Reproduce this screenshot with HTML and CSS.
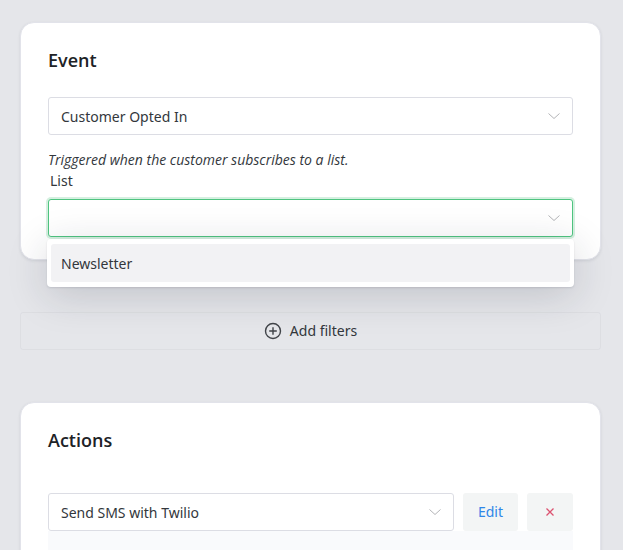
FILE: index.html
```html
<!DOCTYPE html>
<html lang="en">
<head>
<meta charset="utf-8">
<meta name="viewport" content="width=device-width, initial-scale=1">
<title>Event</title>
<link rel="stylesheet" href="styles.css">
</head>
<body>
<main class="page">
  <section class="card">
    <h2 class="card-title">Event</h2>
    <div class="select">
      <select class="control" aria-label="Event">
        <option>Customer Opted In</option>
      </select>
      <svg class="chevron" viewBox="0 0 14 14" aria-hidden="true"><path d="M1.500 4.500 7 9.500l5.500-5"/></svg>
    </div>
    <p class="hint">Triggered when the customer subscribes to a list.</p>
    <label class="label" for="list">List</label>
    <div class="select">
      <select class="control control-active" id="list">
        <option></option>
      </select>
      <svg class="chevron" viewBox="0 0 14 14" aria-hidden="true"><path d="M1.500 4.500 7 9.500l5.500-5"/></svg>
      <ul class="menu" role="listbox" aria-label="List">
        <li class="menu-item" role="option" aria-selected="false">Newsletter</li>
      </ul>
    </div>
  </section>

  <button class="add" type="button">
    <svg class="add-icon" viewBox="0 0 18 18" aria-hidden="true"><circle cx="9" cy="9" r="7.500"/><path d="M9 5.200v7.600M5.200 9h7.600"/></svg>
    Add filters
  </button>

  <section class="card">
    <h2 class="card-title card-title-spaced">Actions</h2>
    <div class="row">
      <div class="select">
        <select class="control" aria-label="Action">
          <option>Send SMS with Twilio</option>
        </select>
        <svg class="chevron" viewBox="0 0 14 14" aria-hidden="true"><path d="M1.500 4.500 7 9.500l5.500-5"/></svg>
      </div>
      <button class="button button-edit" type="button">Edit</button>
      <button class="button button-remove" type="button" aria-label="Remove">
        <svg class="remove-icon" viewBox="0 0 10 10" aria-hidden="true"><path d="m1.500 1.500 7 7m0-7-7 7"/></svg>
      </button>
    </div>
    <div class="details"></div>
  </section>
</main>
</body>
</html>
```
FILE: styles.css
```css
* {
  box-sizing: border-box;
}

body {
  margin: 0;
  background: #e5e6ea;
  color: #33373c;
  font: 14px/20px "Noto Sans", "Open Sans", sans-serif;
}

.page {
  display: flex;
  flex-direction: column;
  gap: 52px;
  height: 100vh;
  overflow: hidden;
  padding: 22px 22px 0 20px;
}

.card {
  flex: none;
  padding: 24px 27px 22px;
  background: #fff;
  border: 1px solid #e2e3ea;
  border-radius: 14px;
  box-shadow: 0 1px 3px rgba(30, 35, 60, 0.1);
}

.card-title {
  margin: 0 0 24px;
  color: #202226;
  font-family: "Open Sans", "Noto Sans", sans-serif;
  font-size: 18px;
  line-height: 26px;
  font-weight: 600;
}

.card-title-spaced {
  margin-bottom: 40px;
}

.select {
  position: relative;
  flex: 1;
}

.control {
  display: block;
  width: 100%;
  height: 38px;
  padding: 2px 36px 0 12px;
  appearance: none;
  background: #fff;
  border: 1px solid #dcdde4;
  border-radius: 3px;
  color: inherit;
  font: inherit;
}

.control-active {
  border-color: #4fc480;
  box-shadow: 0 0 0 2px #d5f0e0;
}

.chevron {
  position: absolute;
  top: 12px;
  right: 12px;
  width: 14px;
  height: 14px;
  fill: none;
  stroke: #b4b5b8;
  pointer-events: none;
}

.hint {
  margin: 15px 0 0;
  font-family: "Open Sans", "Noto Sans", sans-serif;
  font-style: italic;
}

.label {
  display: block;
  margin: 1px 2px 8px;
}

.menu {
  position: absolute;
  top: 40px;
  left: -1px;
  right: -1px;
  margin: 0;
  padding: 5px 4px;
  list-style: none;
  background: #fff;
  border-radius: 4px;
  box-shadow: 0 1px 2px rgba(30, 35, 50, 0.12), 0 8px 40px rgba(30, 35, 50, 0.18);
}

.menu-item {
  padding: 10px 10px 8px;
  background: #f2f2f4;
  border-radius: 3px;
}

.add {
  display: flex;
  flex: none;
  align-items: center;
  justify-content: center;
  gap: 8px;
  height: 38px;
  padding: 0;
  background: transparent;
  border: 1px solid rgba(30, 35, 50, 0.04);
  border-radius: 3px;
  color: inherit;
  font: inherit;
}

.add-icon {
  width: 18px;
  height: 18px;
  fill: none;
  stroke: #414449;
  stroke-width: 1.4;
}

.row {
  display: flex;
  gap: 9px;
}

.button {
  height: 38px;
  padding: 0 15px;
  background: #f3f5f5;
  border: 0;
  border-radius: 3px;
  font: inherit;
}

.button-edit {
  color: #2f86e8;
}

.button-remove {
  display: flex;
  align-items: center;
  padding: 0 18px;
}

.remove-icon {
  width: 10px;
  height: 10px;
  fill: none;
  stroke: #dc5270;
  stroke-width: 1.3;
}

.details {
  min-height: 80px;
  background: #f9fafc;
}
```
